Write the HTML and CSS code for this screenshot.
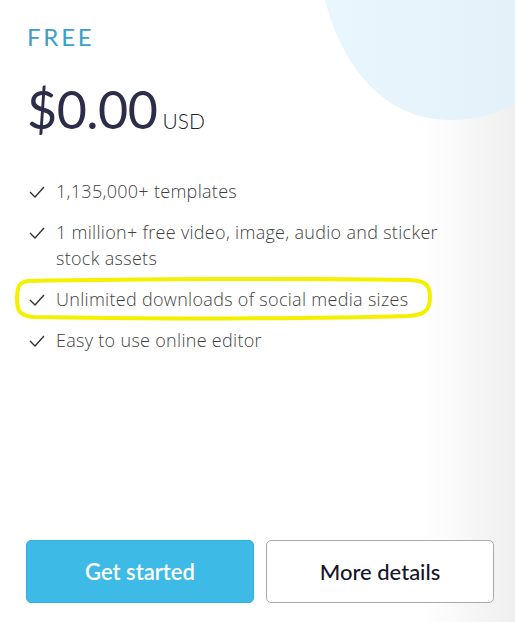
FILE: index.html
```html
<!DOCTYPE html>
<html lang="en">
<head>
<meta charset="utf-8">
<link rel="stylesheet" href="styles.css">
</head>
<body>
<div class="card">
  <svg class="blob" width="200" height="130" viewBox="315 0 200 130" aria-hidden="true">
    <defs>
      <linearGradient id="bg" x1="0" y1="0" x2="1" y2="0">
        <stop offset="0" stop-color="#e9f6fd"/>
        <stop offset="1" stop-color="#e4f1f8"/>
      </linearGradient>
    </defs>
    <path d="M325 0 C340 60 380 120 450 120 C480 120 500 112 515 104 L515 0 Z" fill="url(#bg)"/>
  </svg>
  <div class="plan">FREE</div>
  <div class="price"><span class="amount">$0.00</span><span class="currency">USD</span></div>
  <ul class="features">
    <li><svg class="check" viewBox="0 0 16 12"><path d="M1 6 L6 11 L15 1" fill="none" stroke="#333" stroke-width="1.4"/></svg><span>1,135,000+ templates</span></li>
    <li><svg class="check" viewBox="0 0 16 12"><path d="M1 6 L6 11 L15 1" fill="none" stroke="#333" stroke-width="1.4"/></svg><span>1 million+ free video, image, audio and sticker stock assets</span></li>
    <li class="marked"><svg class="check" viewBox="0 0 16 12"><path d="M1 6 L6 11 L15 1" fill="none" stroke="#333" stroke-width="1.4"/></svg><span>Unlimited downloads of social media sizes</span>
      <svg class="circle" width="420" height="44" viewBox="0 0 420 44" aria-hidden="true"><path d="M14 4 C120 2 300 1 396 3 C412 4 416 8 416 20 C416 34 410 38 394 39 C300 42 120 42 20 40 C6 39 3 34 3 22 C3 10 5 5 14 4 Z" fill="none" stroke="#f4f000" stroke-width="4"/></svg>
    </li>
    <li><svg class="check" viewBox="0 0 16 12"><path d="M1 6 L6 11 L15 1" fill="none" stroke="#333" stroke-width="1.4"/></svg><span>Easy to use online editor</span></li>
  </ul>
  <div class="actions">
    <button class="btn primary">Get started</button>
    <button class="btn secondary">More details</button>
  </div>
</div>
</body>
</html>
```
FILE: styles.css
```css
html, body {
  margin: 0;
  padding: 0;
}
body {
  width: 515px;
  height: 622px;
  overflow: hidden;
  background: linear-gradient(to right, #ffffff 0%, #ffffff 82%, #efefef 100%);
  font-family: "Lato", "Noto Sans", sans-serif;
}
.card {
  position: relative;
  height: 622px;
  box-sizing: border-box;
  padding: 23px 20px 19px 27px;
  display: flex;
  flex-direction: column;
}
.blob {
  position: absolute;
  top: 0;
  right: 0;
}
.plan {
  position: relative;
  font-size: 24px;
  letter-spacing: 2.8px;
  color: #3a9fc9;
  line-height: 28px;
}
.price {
  position: relative;
  margin-top: 28px;
  display: flex;
  align-items: baseline;
  color: #2c2d48;
}
.amount {
  font-size: 52px;
  line-height: 60px;
  letter-spacing: -0.5px;
}
.currency {
  font-size: 21px;
  margin-left: 5px;
  color: #222;
  font-weight: 300;
}
.features {
  list-style: none;
  margin: 39px 0 0 0;
  padding: 0;
  color: #3f3f3f;
  font-family: "Open Sans", "Noto Sans", sans-serif;
  font-weight: 300;
  font-size: 18px;
  letter-spacing: 0.3px;
  line-height: 26px;
}
.features li {
  position: relative;
  display: flex;
  align-items: flex-start;
  margin-bottom: 15px;
  padding-right: 30px;
}
.check {
  width: 16px;
  height: 12px;
  flex: none;
  margin: 8px 11px 0 2px;
}
.circle {
  position: absolute;
  left: -13px;
  top: -9px;
}
.actions {
  margin-top: auto;
  display: grid;
  grid-template-columns: 228px 228px;
  column-gap: 12px;
  margin-left: -1px;
}
.btn {
  height: 63px;
  border-radius: 5px;
  font-family: "Lato", "Noto Sans", sans-serif;
  font-size: 22px;
  font-weight: 600;
  cursor: pointer;
}
.primary {
  background: #3ebae6;
  border: 1px solid #35aede;
  color: #ffffff;
}
.secondary {
  background: #ffffff;
  border: 1px solid #a9a9a9;
  color: #16162a;
  font-weight: 500;
}
```
